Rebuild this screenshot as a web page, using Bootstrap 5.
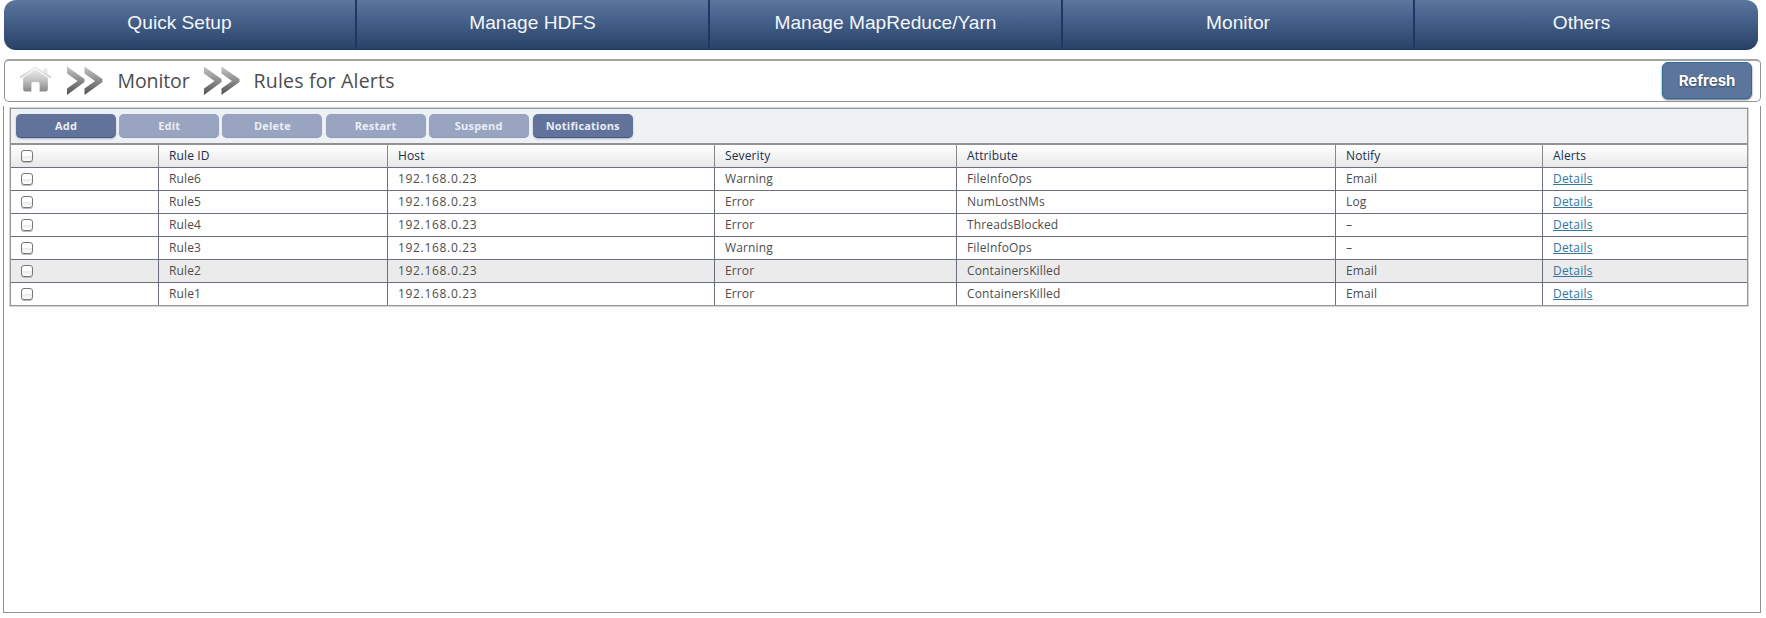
<!DOCTYPE html>
<html lang="en">
<head>
<meta charset="utf-8">
<title>Rules for Alerts</title>
<link href="https://cdn.jsdelivr.net/npm/bootstrap@5.3.0/dist/css/bootstrap.min.css" rel="stylesheet">
<script src="https://cdn.jsdelivr.net/npm/bootstrap@5.3.0/dist/js/bootstrap.bundle.min.js"></script>
<style>
body{font-family:"Open Sans",sans-serif;background:#fefefe;color:#4d4d4d;height:618px;overflow:hidden}
.topnav{margin-left:4px;width:1754px;height:50px;border-radius:12px;background:linear-gradient(#5c779d,#46618a 40%,#294267);border-bottom:1px solid #1c3764;display:grid;grid-template-columns:353px 353px 353px 352px 343px;overflow:hidden}
.topnav .nav-link{font:19.15px/46px "Liberation Sans",sans-serif;padding:0;color:#f4f6fa;text-align:center;height:50px}
.topnav .nav-link:not(:last-child){border-right:2px solid #1e3961}
.topnav .nav-link:last-child{padding-right:10px}
.crumbs{margin:9px 0 0 4px;width:1757px;height:43px;border:1px solid #949494;border-top:2px solid #a3a3a5;border-radius:5px;padding:0 8px 0 14px;font-size:19.5px}
.crumbs svg{flex:none;display:block}
.crumbs .section-name{width:86.5px;margin-left:14.5px;letter-spacing:-.1px;line-height:38px}
.crumbs .page-name{margin-left:13.5px;line-height:38px;letter-spacing:.2px}
.btn-refresh{width:90px;height:37px;margin-top:-1px;border:1px solid #2d6e92;border-radius:6px;background:#5b759c;color:#fff;font:700 15px/35px Inter,sans-serif;letter-spacing:-.05px;padding:0;text-shadow:0 1px 2px #33405c;box-shadow:0 1px 2px #667}
.btn-refresh:hover{background:#4c668d;color:#fff}
.panel{margin:4px 0 0 3px;width:1758px;height:507px;border:solid #929294;border-width:0 1px 1px;padding:2px 0 0 6px}
.grid-box{width:1738px;border:1px solid #97979a;box-shadow:0 0 0 1px #d4d4d4}
.tools{height:36px;background:#eef2f4;border-bottom:2px solid #929294;padding:5px 0 0 5px;gap:3.2px}
.tools .btn{width:100px;height:24px;padding:0;border:0;border-bottom:1px solid #465584;border-radius:5px;background:#62739b;color:#e9edf6;font-size:11px;font-weight:700;line-height:23px;letter-spacing:.2px;opacity:1;box-shadow:0 1px 2px #a9b3c6}
.tools .btn:last-child{margin-left:.8px}
.tools .btn:disabled{background:#99a5c0;border-color:#8c9bb8;box-shadow:0 0 1px #b9c5d6}
.rules{table-layout:fixed;width:1736px;margin:0;font-size:12px;letter-spacing:.13px;border-collapse:separate;border-spacing:0}
.rules th,.rules td{height:23px;padding:0 0 1px 10px;line-height:21px;border:0 solid #69707c;border-width:0 1px 1px 0;color:#4d4d4d;vertical-align:middle;background:none;box-shadow:none}
.rules th{font-weight:400;color:#1b2f4a;border-right-color:#88888c;background:linear-gradient(#fff,#e8e8ea)}
.rules tr>:last-child{border-right:0}
.rules tbody tr:last-child td{border-bottom:0;height:22px}
.rules td:nth-child(3){letter-spacing:.68px}
.rules .hovered td{background:#ebebeb}
.rules a{color:#32789f;text-underline-offset:1px;letter-spacing:.2px}
.rules .form-check-input{display:block;width:12px;height:12px;margin:1px 0 0;border:1px solid #777;border-radius:3px;background:linear-gradient(#fff 0 45%,#e9e9e9 50%,#fff);box-shadow:0 1px 0 #bbb}
</style>
</head>
<body>
<nav class="topnav nav">
<a class="nav-link" href="#">Quick Setup</a><a class="nav-link" href="#">Manage HDFS</a><a class="nav-link" href="#">Manage MapReduce/Yarn</a><a class="nav-link" href="#">Monitor</a><a class="nav-link" href="#">Others</a>
</nav>
<div class="crumbs d-flex align-items-center bg-white">
<svg width="33" height="26" viewBox="0 0 32 26" preserveAspectRatio="none" style="margin-top:-5px"><defs><linearGradient id="hg" gradientUnits="userSpaceOnUse" x1="0" y1="0" x2="0" y2="26"><stop offset="0" stop-color="#f6f6f6"/><stop offset=".5" stop-color="#c8c8c8"/><stop offset="1" stop-color="#858585"/></linearGradient></defs><path fill="none" stroke="url(#hg)" stroke-width="2" stroke-linejoin="round" d="M1 11.5 16 1.3 31 11.5"/><path fill="url(#hg)" d="M24 2h3.500v6L24 5.600zM16 3.500 28 11.700V23q0 2.500-2.500 2.500H20V18q0-2-2-2h-4q-2 0-2 2v7.500H6.500Q4 25.500 4 23V11.700z"/></svg>
<svg width="36" height="30" viewBox="0 0 36 30" style="margin-left:15px"><defs><linearGradient id="cg" gradientUnits="userSpaceOnUse" x1="0" y1="0" x2="0" y2="30"><stop offset="0" stop-color="#c8c8c8"/><stop offset=".5" stop-color="#8a8a8a"/><stop offset="1" stop-color="#4c4c4c"/></linearGradient></defs><path id="chev" fill="url(#cg)" d="M0 .500 17.500 13v3L0 29v-6.500L10.500 15 0 7.500zM17.500 .500l18 12.500v3l-18 13v-6.500L28 15 17.500 7.500z"/></svg>
<span class="section-name">Monitor</span>
<svg width="36" height="30" viewBox="0 0 36 30"><use href="#chev"/></svg>
<span class="page-name">Rules for Alerts</span>
<button type="button" class="btn btn-refresh ms-auto">Refresh</button>
</div>
<main class="panel">
<div class="grid-box">
<div class="tools d-flex">
<button type="button" class="btn">Add</button><button type="button" class="btn" disabled>Edit</button><button type="button" class="btn" disabled>Delete</button><button type="button" class="btn" disabled>Restart</button><button type="button" class="btn" disabled>Suspend</button><button type="button" class="btn">Notifications</button>
</div>
<table class="table rules">
<colgroup><col style="width:148px"><col style="width:229px"><col style="width:327px"><col style="width:242px"><col style="width:379px"><col style="width:207px"><col></colgroup>
<thead><tr><th><input type="checkbox" class="form-check-input"></th><th>Rule ID</th><th>Host</th><th>Severity</th><th>Attribute</th><th>Notify</th><th>Alerts</th></tr></thead>
<tbody>
<tr><td><input type="checkbox" class="form-check-input"></td><td>Rule6</td><td>192.168.0.23</td><td>Warning</td><td>FileInfoOps</td><td>Email</td><td><a href="#">Details</a></td></tr>
<tr><td><input type="checkbox" class="form-check-input"></td><td>Rule5</td><td>192.168.0.23</td><td>Error</td><td>NumLostNMs</td><td>Log</td><td><a href="#">Details</a></td></tr>
<tr><td><input type="checkbox" class="form-check-input"></td><td>Rule4</td><td>192.168.0.23</td><td>Error</td><td>ThreadsBlocked</td><td>–</td><td><a href="#">Details</a></td></tr>
<tr><td><input type="checkbox" class="form-check-input"></td><td>Rule3</td><td>192.168.0.23</td><td>Warning</td><td>FileInfoOps</td><td>–</td><td><a href="#">Details</a></td></tr>
<tr class="hovered"><td><input type="checkbox" class="form-check-input"></td><td>Rule2</td><td>192.168.0.23</td><td>Error</td><td>ContainersKilled</td><td>Email</td><td><a href="#">Details</a></td></tr>
<tr><td><input type="checkbox" class="form-check-input"></td><td>Rule1</td><td>192.168.0.23</td><td>Error</td><td>ContainersKilled</td><td>Email</td><td><a href="#">Details</a></td></tr>
</tbody>
</table>
</div>
</main>
</body>
</html>
